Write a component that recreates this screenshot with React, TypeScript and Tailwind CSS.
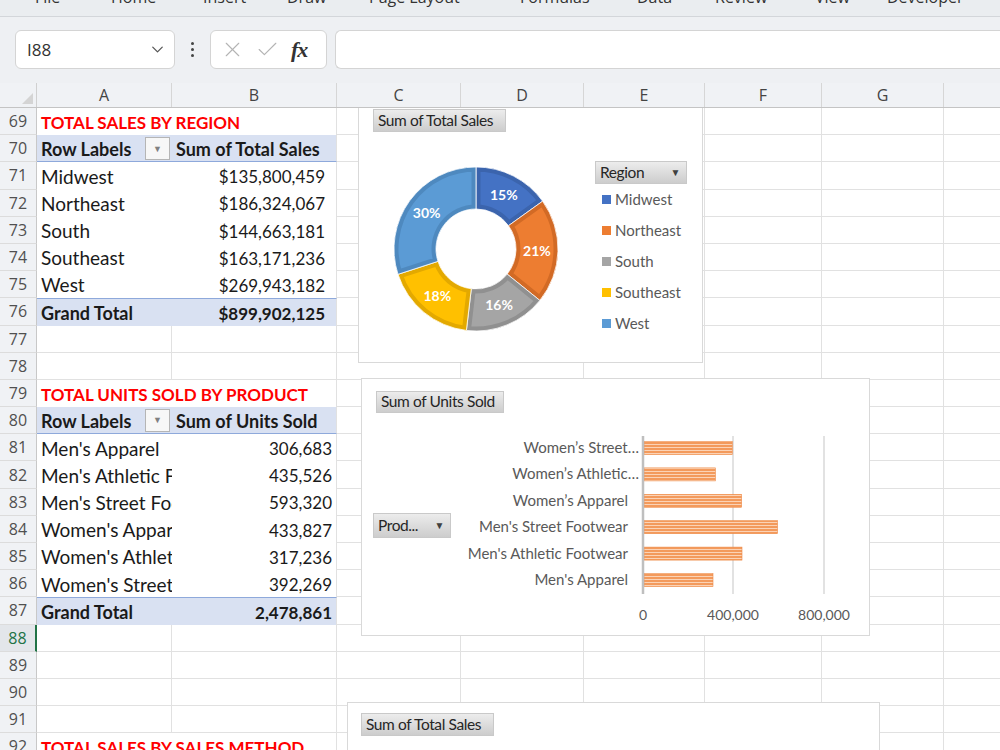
import { ChevronDown, X, Check } from 'lucide-react';

type RowKind = 'blank' | 'title' | 'head' | 'data' | 'total';
type SheetRow = { n: number; kind: RowKind; a?: string; b?: string; pr?: string };

const cols = [
  { key: 'C', w: 'w-[124px]' },
  { key: 'D', w: 'w-[123px]' },
  { key: 'E', w: 'w-[121px]' },
  { key: 'F', w: 'w-[117px]' },
  { key: 'G', w: 'w-[122px]' },
  { key: 'H', w: 'w-[130px]' },
];

const rows: SheetRow[] = [
  { n: 69, kind: 'title', a: 'TOTAL SALES BY REGION' },
  { n: 70, kind: 'head', a: 'Row Labels', b: 'Sum of Total Sales' },
  { n: 71, kind: 'data', a: 'Midwest', b: '$135,800,459', pr: 'pr-[11px]' },
  { n: 72, kind: 'data', a: 'Northeast', b: '$186,324,067', pr: 'pr-[11px]' },
  { n: 73, kind: 'data', a: 'South', b: '$144,663,181', pr: 'pr-[11px]' },
  { n: 74, kind: 'data', a: 'Southeast', b: '$163,171,236', pr: 'pr-[11px]' },
  { n: 75, kind: 'data', a: 'West', b: '$269,943,182', pr: 'pr-[11px]' },
  { n: 76, kind: 'total', a: 'Grand Total', b: '$899,902,125', pr: 'pr-[11px]' },
  { n: 77, kind: 'blank' },
  { n: 78, kind: 'blank' },
  { n: 79, kind: 'title', a: 'TOTAL UNITS SOLD BY PRODUCT' },
  { n: 80, kind: 'head', a: 'Row Labels', b: 'Sum of Units Sold' },
  { n: 81, kind: 'data', a: "Men's Apparel", b: '306,683', pr: 'pr-[4px]' },
  { n: 82, kind: 'data', a: "Men's Athletic Footwear", b: '435,526', pr: 'pr-[4px]' },
  { n: 83, kind: 'data', a: "Men's Street Footwear", b: '593,320', pr: 'pr-[4px]' },
  { n: 84, kind: 'data', a: "Women's Apparel", b: '433,827', pr: 'pr-[4px]' },
  { n: 85, kind: 'data', a: "Women's Athletic Footwear", b: '317,236', pr: 'pr-[4px]' },
  { n: 86, kind: 'data', a: "Women's Street Footwear", b: '392,269', pr: 'pr-[4px]' },
  { n: 87, kind: 'total', a: 'Grand Total', b: '2,478,861', pr: 'pr-[4px]' },
  { n: 88, kind: 'blank' },
  { n: 89, kind: 'blank' },
  { n: 90, kind: 'blank' },
  { n: 91, kind: 'blank' },
  { n: 92, kind: 'title', a: 'TOTAL SALES BY SALES METHOD' },
];

const tabs = [
  { label: 'File', w: 'w-[76px]' },
  { label: 'Home', w: 'w-[92px]' },
  { label: 'Insert', w: 'w-[84px]' },
  { label: 'Draw', w: 'w-[82px]' },
  { label: 'Page Layout', w: 'w-[151px]' },
  { label: 'Formulas', w: 'w-[117px]' },
  { label: 'Data', w: 'w-[78px]' },
  { label: 'Review', w: 'w-[100px]' },
  { label: 'View', w: 'w-[72px]' },
  { label: 'Developer', w: 'w-[110px]' },
];

const regions = [
  { name: 'Midwest', value: 135800459, fill: '#4472c4', edge: '#3b64ad' },
  { name: 'Northeast', value: 186324067, fill: '#ed7d31', edge: '#d26a25' },
  { name: 'South', value: 144663181, fill: '#a5a5a5', edge: '#909090' },
  { name: 'Southeast', value: 163171236, fill: '#ffc000', edge: '#e3a900' },
  { name: 'West', value: 269943182, fill: '#5b9bd5', edge: '#4e89bf' },
];

const products = [
  { name: 'Women\u2019s Street\u2026', value: 392269, x: 277 },
  { name: 'Women\u2019s Athletic\u2026', value: 317236, x: 277 },
  { name: 'Women\u2019s Apparel', value: 433827, x: 266 },
  { name: "Men's Street Footwear", value: 593320, x: 266 },
  { name: "Men's Athletic Footwear", value: 435526, x: 266 },
  { name: "Men's Apparel", value: 306683, x: 266 },
];

function arc(cx: number, cy: number, r0: number, r1: number, a0: number, a1: number) {
  const p = (r: number, a: number) => [cx + r * Math.sin(a), cy - r * Math.cos(a)];
  const large = a1 - a0 > Math.PI ? 1 : 0;
  const [x1, y1] = p(r1, a0);
  const [x2, y2] = p(r1, a1);
  const [x3, y3] = p(r0, a1);
  const [x4, y4] = p(r0, a0);
  return `M${x1} ${y1}A${r1} ${r1} 0 ${large} 1 ${x2} ${y2}L${x3} ${y3}A${r0} ${r0} 0 ${large} 0 ${x4} ${y4}Z`;
}

function ChartButton({ label, arrow, className }: { label: string; arrow?: boolean; className: string }) {
  return (
    <div
      className={`absolute flex items-center justify-between whitespace-nowrap bg-linear-to-b from-[#ececec] to-[#cdcdcd] border border-[#c9c9c9] text-[15.5px] text-[#262626] tracking-[-0.4px] px-[4px] ${className}`}
    >
      <span>{label}</span>
      {arrow && <span className="text-[10px] text-[#404040] pr-[2px]">▼</span>}
    </div>
  );
}

function DonutChart() {
  const total = regions.reduce((s, r) => s + r.value, 0);
  const cx = 117;
  const cy = 152;
  const segs = regions.map((r, i) => {
    const start = regions.slice(0, i).reduce((s, x) => s + x.value, 0) / total;
    const a0 = start * Math.PI * 2;
    const a1 = (start + r.value / total) * Math.PI * 2;
    return { ...r, a0, a1, d: arc(cx, cy, 40, 82, a0, a1) };
  });
  return (
    <div className="absolute left-[358px] top-[-12px] w-[345px] h-[267px] bg-white border border-[#d9d9d9]">
      <ChartButton label="Sum of Total Sales" className="left-[14px] top-[12px] w-[133px] h-[23px]" />
      <svg className="absolute left-0 top-0" width="345" height="267">
        <defs>
          {segs.map((s, i) => (
            <clipPath id={`seg${i}`} key={s.name}>
              <path d={s.d} />
            </clipPath>
          ))}
        </defs>
        {segs.map((s, i) => {
          const mid = (s.a0 + s.a1) / 2;
          return (
            <g key={s.name}>
              <path d={s.d} fill={s.fill} />
              <path d={s.d} fill="none" stroke={s.edge} strokeWidth="9" clipPath={`url(#seg${i})`} />
              <path d={s.d} fill="none" stroke="#ffffff" strokeWidth="0.8" />
              <text
                x={cx + 61 * Math.sin(mid)}
                y={cy - 61 * Math.cos(mid) + 5}
                textAnchor="middle"
                fill="#ffffff"
                fontSize="14"
                fontWeight="700"
                fontFamily="Lato, sans-serif"
              >
                {Math.round((s.value / total) * 100)}%
              </text>
            </g>
          );
        })}
      </svg>
      <div className="absolute left-[236px] top-[64px] w-[92px] flex flex-col">
        <ChartButton label="Region" arrow className="relative w-[92px] h-[23px]" />
        {regions.map((r) => (
          <div key={r.name} className="h-[31px] flex items-center gap-[4px] pl-[7px] text-[15px] text-[#595959]">
            <span className="w-[9px] h-[9px]" style={{ backgroundColor: r.fill }} />
            <span>{r.name}</span>
          </div>
        ))}
      </div>
    </div>
  );
}

function BarChart() {
  const scale = 90 / 400000;
  return (
    <div className="absolute left-[361px] top-[270px] w-[509px] h-[258px] bg-white border border-[#d9d9d9]">
      <ChartButton label="Sum of Units Sold" className="left-[14px] top-[12px] w-[128px] h-[22px]" />
      <ChartButton label="Prod..." arrow className="left-[11px] top-[134px] w-[78px] h-[25px]" />
      <svg className="absolute left-0 top-0" width="509" height="258">
        <defs>
          <pattern id="stripes" width="4" height="3" patternUnits="userSpaceOnUse">
            <rect width="4" height="3" fill="#f39a5c" />
            <rect y="2" width="4" height="1" fill="#fbd3b6" />
          </pattern>
        </defs>
        <line x1="371" y1="57" x2="371" y2="215" stroke="#d9d9d9" strokeWidth="1.5" />
        <line x1="462" y1="57" x2="462" y2="215" stroke="#d9d9d9" strokeWidth="1.5" />
        {products.map((p, i) => {
          const y = 69 + i * 26.4;
          return (
            <g key={p.name}>
              <rect x="282" y={y - 6.5} width={p.value * scale} height="13" fill="url(#stripes)" stroke="#ee8a47" strokeWidth="0.6" />
              <text x={p.x} y={y + 5} textAnchor="end" fontSize="15" fill="#595959" fontFamily="Lato, sans-serif">
                {p.name}
              </text>
            </g>
          );
        })}
        <line x1="281" y1="57" x2="281" y2="215" stroke="#bfbfbf" strokeWidth="2.5" />
        {[
          { x: 281, t: '0' },
          { x: 371, t: '400,000' },
          { x: 462, t: '800,000' },
        ].map((a) => (
          <text key={a.t} x={a.x} y="241" textAnchor="middle" fontSize="14" fill="#595959" fontFamily="Lato, sans-serif">
            {a.t}
          </text>
        ))}
      </svg>
    </div>
  );
}

function GridRow({ row }: { row: SheetRow }) {
  const selected = row.n === 88;
  const banded = row.kind === 'head' || row.kind === 'total';
  const line =
    row.kind === 'head' ? 'border-b border-[#8ea9db]' : row.kind === 'total' ? 'border-t border-[#8ea9db]' : '';
  const blank = row.kind === 'blank';
  return (
    <div className="flex h-[27.2px]">
      <div
        className={`w-[37px] shrink-0 flex items-center justify-center border-b border-[#dcdcdc] font-['Open_Sans',sans-serif] text-[16px] ${
          selected ? 'bg-[#e3e6ea] text-[#217346] border-r-2 border-r-[#217346]' : 'bg-[#f0f2f5] text-[#505050] border-r border-r-[#c8c8c8]'
        }`}
      >
        {row.n}
      </div>
      {blank ? (
        <>
          <div className="w-[135px] shrink-0 border-r border-b border-[#e1e1e1] bg-white" />
          <div className="w-[165px] shrink-0 border-r border-b border-[#e1e1e1] bg-white" />
        </>
      ) : (
        <div className={`w-[300px] shrink-0 flex border-r border-r-[#e1e1e1] ${banded ? 'bg-[#d9e1f2]' : 'bg-white'} ${line}`}>
          {row.kind === 'title' ? (
            <div className="pl-[4px] pt-[2px] flex items-center whitespace-nowrap text-[17px] font-bold text-[#ff0000]">{row.a}</div>
          ) : (
            <>
              <div className="w-[135px] shrink-0 flex items-center justify-between overflow-hidden pl-[4px] pr-[2px]">
                <span
                  className={`whitespace-nowrap text-[#1a1a1a] pt-[2px] ${banded ? 'font-bold text-[18px]' : 'text-[19px]'}`}
                >
                  {row.a}
                </span>
                {row.kind === 'head' && (
                  <span className="w-[25px] h-[23px] shrink-0 flex items-center justify-center bg-[#f7f7f7] border border-[#b5b5b5] text-[9px] text-[#808080]">
                    ▼
                  </span>
                )}
              </div>
              <div
                className={`flex-1 flex items-center whitespace-nowrap text-[#1a1a1a] pt-[2px] ${
                  row.kind === 'head'
                    ? 'pl-[4px] font-bold text-[18px]'
                    : `justify-end text-[17px] ${row.pr} ${banded ? 'font-bold' : ''}`
                }`}
              >
                {row.b}
              </div>
            </>
          )}
        </div>
      )}
      {cols.map((c) => (
        <div key={c.key} className={`${c.w} shrink-0 border-r border-b border-[#e1e1e1] bg-white`} />
      ))}
    </div>
  );
}

export default function App() {
  return (
    <div className="w-[1000px] h-[750px] overflow-hidden flex flex-col bg-white font-[Lato,sans-serif]">
      {/* ribbon tabs, mostly scrolled off */}
      <div className="h-[17px] shrink-0 bg-[#eaedf0] border-b border-[#d3d6da] overflow-hidden font-['Open_Sans',sans-serif] text-[16px] text-[#333]">
        <div className="flex pl-[35px] mt-[-13px] leading-[20px]">
          {tabs.map((t) => (
            <span key={t.label} className={`${t.w} shrink-0 whitespace-nowrap`}>
              {t.label}
            </span>
          ))}
        </div>
      </div>

      {/* formula bar */}
      <div className="h-[66px] shrink-0 bg-[#eef0f3] flex items-center pl-[15px] pb-[1px]">
        <div className="w-[160px] h-[39px] bg-white border border-[#d4d4d4] rounded-[6px] flex items-center justify-between pl-[11px] pr-[7px]">
          <span className="font-['Open_Sans',sans-serif] text-[17px] text-[#333]">I88</span>
          <ChevronDown size={19} strokeWidth={1.6} className="text-[#555]" />
        </div>
        <div className="w-[35px] flex flex-col items-center gap-[3px]">
          <span className="w-[3px] h-[3px] rounded-full bg-[#444]" />
          <span className="w-[3px] h-[3px] rounded-full bg-[#444]" />
          <span className="w-[3px] h-[3px] rounded-full bg-[#444]" />
        </div>
        <div className="w-[117px] h-[39px] bg-white border border-[#d4d4d4] rounded-[6px] flex items-center pl-[9px] gap-[10px]">
          <X size={25} strokeWidth={1.1} className="text-[#b4b4b4]" />
          <Check size={25} strokeWidth={1.1} className="text-[#b4b4b4]" />
          <span className="font-['Liberation_Serif',serif] italic font-semibold text-[22px] text-[#333] tracking-[-1px] ml-[1px]">fx</span>
        </div>
        <div className="ml-[8px] flex-1 h-[39px] bg-white border border-[#d4d4d4] border-r-0 rounded-l-[6px]" />
      </div>

      {/* column headers */}
      <div className="h-[25px] shrink-0 flex bg-[#f0f2f5] border-b border-[#c4c4c4] font-['Open_Sans',sans-serif] text-[16px] text-[#444]">
        <div className="w-[37px] shrink-0 border-r border-[#d0d0d0] flex items-end justify-end p-[3px]">
          <svg width="11" height="11">
            <polygon points="11,0 11,11 0,11" fill="#d4d4d4" />
          </svg>
        </div>
        {[
          { k: 'A', w: 'w-[135px]' },
          { k: 'B', w: 'w-[165px]' },
          { k: 'C', w: 'w-[124px]' },
          { k: 'D', w: 'w-[123px]' },
          { k: 'E', w: 'w-[121px]' },
          { k: 'F', w: 'w-[117px]' },
          { k: 'G', w: 'w-[122px]' },
          { k: 'H', w: 'w-[130px]' },
        ].map((c) => (
          <div key={c.k} className={`${c.w} shrink-0 border-r border-[#d6d6d6] flex items-center justify-center leading-none`}>
            {c.k}
          </div>
        ))}
      </div>

      {/* sheet */}
      <div className="relative flex-1 overflow-hidden">
        {rows.map((r) => (
          <GridRow key={r.n} row={r} />
        ))}
        <DonutChart />
        <BarChart />
        <div className="absolute left-[347px] top-[594px] w-[533px] h-[200px] bg-white border border-[#d9d9d9]">
          <ChartButton label="Sum of Total Sales" className="left-[13px] top-[10px] w-[133px] h-[23px]" />
        </div>
      </div>
    </div>
  );
}
